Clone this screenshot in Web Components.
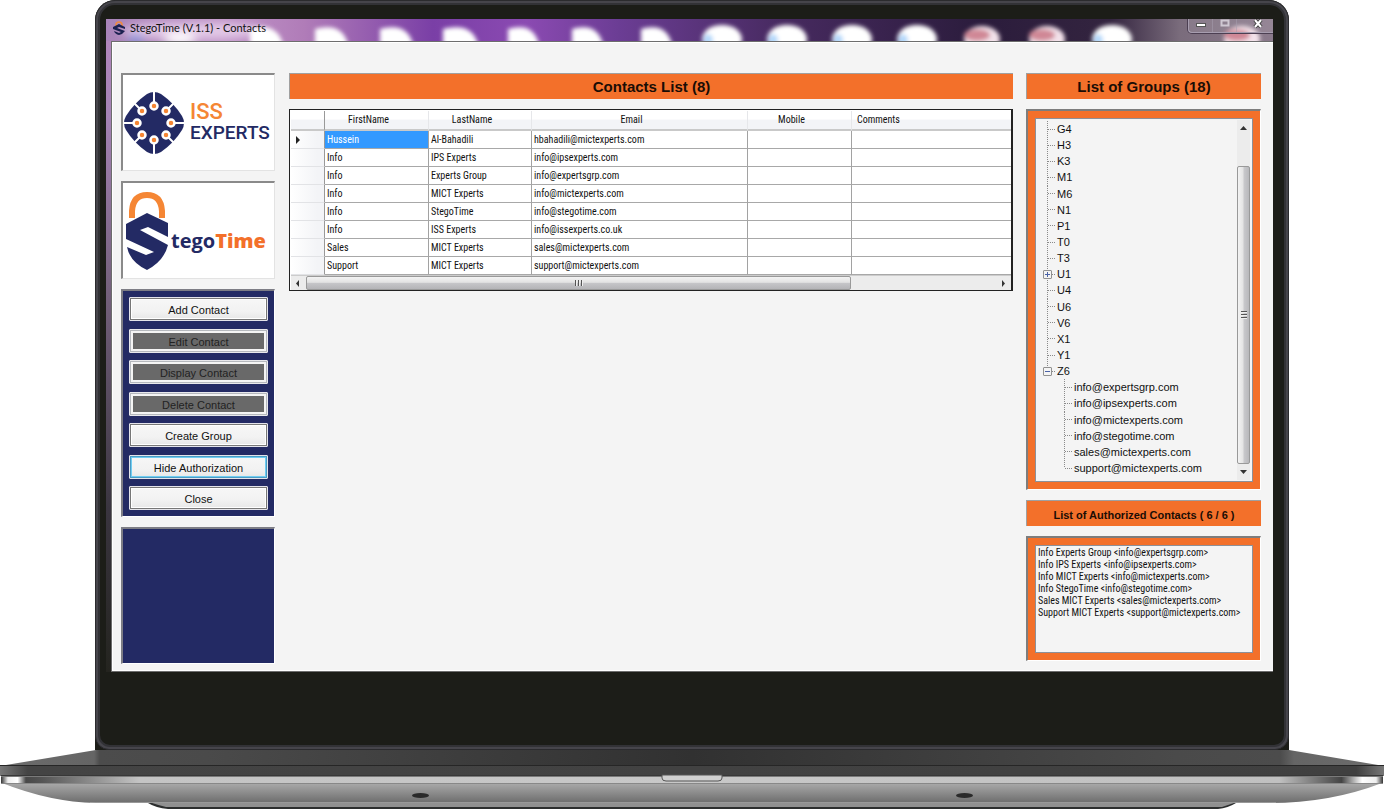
<!DOCTYPE html>
<html lang="en">
<head>
<meta charset="utf-8">
<title>StegoTime (V.1.1) - Contacts</title>
<style>
  body {
    margin: 0;
    background: #fff;
    color: #111;
    font-family: "Liberation Sans", Arial, sans-serif;
    --navy: #232a64;
    --orange: #f3702a;
    --face: #f4f4f4;
    --narrow: "Roboto Condensed", Lato, "Liberation Sans", sans-serif;
  }
</style>
</head>
<body>
<laptop-frame>
  <app-window>
    <span slot="title">StegoTime (V.1.1) - Contacts</span>
    <side-bar slot="left"></side-bar>
    <section-title slot="main">Contacts List (8)</section-title>
    <contacts-table slot="main"></contacts-table>
    <section-title slot="right">List of Groups (18)</section-title>
    <groups-tree slot="right"></groups-tree>
    <section-title slot="right" small>List of Authorized Contacts ( 6 / 6 )</section-title>
    <authorized-list slot="right"></authorized-list>
  </app-window>
</laptop-frame>

<script>
function define(name, html) {
  customElements.define(name, class extends HTMLElement {
    constructor() {
      super();
      const t = document.createElement('template');
      t.innerHTML = typeof html === 'function' ? html() : html;
      this.attachShadow({ mode: 'open' }).append(t.content.cloneNode(true));
    }
  });
}

define('laptop-frame', `
<style>
  :host { display: block; }
  .lid { margin: 0 95px; background: #1c1d18; border-radius: 20px 20px 0 0; }
  .rim { border: 1px solid #2b2b2e; border-radius: 20px 20px 14px 14px; background: #46454b; padding: 2px; }
  .rim2 { border: 2px solid #323236; border-radius: 17px 17px 12px 12px; background: #1c1d18; padding: 14px 11px 73px 6px; }
  .base { display: block; width: 100%; height: 59px; }
</style>
<div class="lid"><div class="rim"><div class="rim2"><slot></slot></div></div></div>
<svg class="base" viewBox="0 0 1384 59" preserveAspectRatio="none" aria-hidden="true">
  <defs>
    <linearGradient id="deck"><stop offset="0" stop-color="#6c6c6c"/><stop offset=".068" stop-color="#656565"/><stop offset=".072" stop-color="#4c4c4c"/><stop offset=".15" stop-color="#4a4a4a"/><stop offset=".5" stop-color="#313131"/><stop offset=".85" stop-color="#4a4a4a"/><stop offset=".925" stop-color="#4c4c4c"/><stop offset=".935" stop-color="#656565"/><stop offset="1" stop-color="#6c6c6c"/></linearGradient>
    <linearGradient id="edge"><stop offset="0" stop-color="#777"/><stop offset=".02" stop-color="#444"/><stop offset=".98" stop-color="#404040"/><stop offset="1" stop-color="#777"/></linearGradient>
    <linearGradient id="strip"><stop offset="0" stop-color="#333"/><stop offset=".005" stop-color="#eee"/><stop offset=".012" stop-color="#fff"/><stop offset=".018" stop-color="#484848"/><stop offset=".03" stop-color="#555"/><stop offset=".1" stop-color="#c4c4c4"/><stop offset=".5" stop-color="#c8c8c8"/><stop offset=".925" stop-color="#c0c0c0"/><stop offset=".97" stop-color="#444"/><stop offset=".985" stop-color="#fff"/><stop offset=".995" stop-color="#eee"/><stop offset="1" stop-color="#333"/></linearGradient>
    <linearGradient id="belly" x2="0" y2="1"><stop offset="0" stop-color="#aaa"/><stop offset="1" stop-color="#6c6c6c"/></linearGradient>
  </defs>
  <path d="M96 0H1289L1384 16H0Z" fill="url(#deck)"/>
  <path d="M148 53Q156 58 168 59H1218Q1228 58 1236 53Z" fill="#2c2e2e"/>
  <path d="M152 53Q158 55 166 57H1222Q1228 55 1234 53Z" fill="#909090"/>
  <path d="M2 33H1382Q1330 53 1270 53H96Q50 52 2 33Z" fill="url(#belly)"/>
  <path d="M90 52.500H1276" stroke="#ababab" fill="none" opacity=".7"/>
  <rect y="15" width="1384" height="11" fill="url(#edge)"/>
  <rect y="15" width="1384" height="1" fill="#262626"/>
  <rect x="1" y="25" width="1382" height="8" fill="url(#strip)"/>
  <rect x="1" y="25" width="1382" height="1" fill="#383838"/>
  <rect x="1" y="26" width="1382" height="1" fill="#7a7a7a"/>
  <rect x="1" y="33" width="1382" height="1" fill="#888"/>
  <path d="M662 25V28Q662 31 666 31H718Q722 31 722 28V25Z" fill="#d0d0d0" stroke="#555"/>
  <ellipse cx="420.500" cy="45.500" rx="8.500" ry="2.500" fill="#2a2a2a"/>
  <ellipse cx="964.500" cy="45.500" rx="8.500" ry="2.500" fill="#2a2a2a"/>
</svg>`);

function desktopBlobs() {
  const white = [[265,15],[330,15],[395,15],[459,16],[522,14],[586,14],[655,14]]
    .map(([x, r]) => `<path d="M${x-r-106} 26V10Q${x-106+r-2} 3 ${x-106+r+3} 26Z" fill="#fff"/>`).join('');
  const blue = [722,787,852,917,1112]
    .map(x => `<ellipse cx="${x-106}" cy="20" rx="20" ry="14" fill="#fff"/><ellipse cx="${x-120}" cy="21" rx="5" ry="6" fill="#b4d8fa"/>`).join('');
  const red = [980,1045,1240]
    .map(x => `<ellipse cx="${x-104}" cy="20" rx="18" ry="13" fill="#f3e2ea"/><ellipse cx="${x-109}" cy="16" rx="13" ry="6" fill="#d08896"/>`).join('');
  return white + blue + red;
}

define('app-window', () => `
<style>
  :host { display: block; background: linear-gradient(#b487bd, #a583b4 15%, #77637f 40%, #3a3540 75%, #24241f); padding-left: 5px; }
  header { position: relative; margin-left: -5px; height: 22px; overflow: hidden; display: flex; align-items: center; justify-content: space-between; background: linear-gradient(90deg, #a884b8 0, #c094c8 10%, #b07cb8 17%, #7a3fa6 28%, #8b4ab2 36%, #6b3d94 44%, #472a60 58%, #2b1c3c 75%, #33243f 86%, #7a6c7c 92%, #8b7a8c 100%); }
  .glow { position: absolute; inset: 0; width: 100%; height: 22px; }
  .title { position: relative; display: flex; align-items: center; gap: 5px; padding: 0 0 5px 7px; font: 11px/16px Lato, "Liberation Sans", sans-serif; color: #111; }
  .title svg { width: 12px; height: 14px; }
  .controls { position: relative; align-self: flex-start; display: flex; border: 1px solid #a79daf; border-width: 0 0 1px 1px; border-radius: 0 0 0 4px; box-shadow: 0 0 0 1px #4c3f52; }
  .controls button { box-sizing: border-box; width: 24px; height: 13px; padding: 0; border: 0; border-right: 1px solid #a79daf88; background: #ffffff18; display: flex; justify-content: center; align-items: flex-start; }
  .controls button:last-child { width: 36px; padding-left: 5px; border: 0; }
  .body { display: grid; grid-template-columns: 154px minmax(0, 1fr) 235px; column-gap: 13px; align-items: stretch; background: var(--face); border: 1px solid #6d6d6d; border-right: 0; box-shadow: inset 1px 1px #fff, inset 0 -1px #fff; padding: 31px 12px 7px 9px; }
  .col { display: flex; flex-direction: column; gap: 10px; }
  .main { padding-left: 1px; }
  .right { padding-bottom: 3px; }
</style>
<header>
  <svg class="glow" viewBox="0 0 1167 22" preserveAspectRatio="xMinYMin slice" aria-hidden="true">
    <defs><filter id="b" x="-20%" y="-80%" width="140%" height="260%"><feGaussianBlur stdDeviation="2"/></filter>
    <filter id="b2" x="-20%" y="-80%" width="140%" height="260%"><feGaussianBlur stdDeviation="5"/></filter></defs>
    <g filter="url(#b2)"><ellipse cx="88" cy="12" rx="72" ry="8" fill="#e4cbe8"/><ellipse cx="30" cy="20" rx="8" ry="5" fill="#7e8ed8"/><ellipse cx="74" cy="20" rx="16" ry="6" fill="#fff"/></g>
    <g filter="url(#b)">${desktopBlobs()}</g>
  </svg>
  <div class="title">
    <svg viewBox="0 0 12 14" aria-hidden="true"><path d="M3 5V4Q3 1 6 1T9 4V5" fill="none" stroke="#f08a3c" stroke-width="1.500"/><path d="M6 3L12 6V8L6 6L4 7L12 10Q10 13 6 14Q2 13 1 10L6 12L8 11L0 8V6Z" fill="#1c2150"/></svg>
    <slot name="title"></slot>
  </div>
  <div class="controls">
    <button aria-label="Minimize"><svg width="12" height="12"><rect x="1.500" y="4.500" width="9" height="3" fill="#fff" stroke="#555"/></svg></button>
    <button aria-label="Maximize"><svg width="12" height="12"><rect x="2.500" y="1.500" width="7" height="5" fill="none" stroke="#cfc8d2" stroke-width="2"/></svg></button>
    <button aria-label="Close"><svg width="12" height="12"><path d="M3 1L9 8M9 1L3 8" stroke="#444" stroke-width="4"/><path d="M3 1L9 8M9 1L3 8" stroke="#fff" stroke-width="2"/></svg></button>
  </div>
</header>
<div class="body">
  <div class="col"><slot name="left"></slot></div>
  <div class="col main"><slot name="main"></slot></div>
  <div class="col right"><slot name="right"></slot></div>
</div>`);

define('section-title', `
<style>
  :host { display: block; box-sizing: border-box; height: 26px; border: 1px solid #a0a0a0; border-width: 1px 0 0 1px; background: var(--orange); color: #1a0d05; text-align: center; font-weight: bold; font-size: 15px; line-height: 26px; }
  :host([small]) { font-size: 11px; line-height: 28px; }
</style><slot></slot>`);

define('iss-logo', `
<style>
  :host { display: flex; align-items: center; gap: 6px; height: 100%; padding-left: 1px; }
  svg { flex: none; width: 60px; height: 62px; }
  .word { display: flex; flex-direction: column; padding-bottom: 2px; font: 500 19px/19px Roboto, sans-serif; color: var(--navy); }
  .word span:first-child { font-size: 22px; line-height: 22px; color: #f58634; }
</style>
<svg viewBox="-30 -31 60 62" aria-hidden="true">
  <path d="M-7 -29Q0 -33 7 -29Q20 -20 28 -7Q32 0 28 7Q20 20 7 29Q0 33 -7 29Q-20 20 -28 7Q-32 0 -28 -7Q-20 -20 -7 -29Z" fill="#232a64"/>
  <g stroke="#fff" stroke-width="2"><path d="M0 -31V-17M0 31V17M-31 0H-17M31 0H17M-21 -21L-12 -12M21 -21L12 -12M-21 21L-12 12M21 21L12 12"/></g>
  <g fill="#f58634" stroke="#fff" stroke-width="2.500"><circle cy="-17" r="3.500"/><circle cy="17" r="3.500"/><circle cx="-17" r="3.500"/><circle cx="17" r="3.500"/><circle cx="-12" cy="-12" r="3.500"/><circle cx="12" cy="-12" r="3.500"/><circle cx="-12" cy="12" r="3.500"/><circle cx="12" cy="12" r="3.500"/></g>
</svg>
<div class="word"><span>ISS</span><span>EXPERTS</span></div>`);

define('stego-logo', `
<style>
  :host { display: flex; align-items: center; gap: 3px; height: 100%; padding-left: 3px; }
  svg { flex: none; width: 42px; height: 80px; }
  .word { font: bold 20px/30px "Open Sans", sans-serif; color: var(--navy); padding-top: 20px; }
  .word b { color: #f3702a; }
</style>
<svg viewBox="0 0 42 80" aria-hidden="true">
  <path d="M6 27V20Q7 4 21 4T36 20V27" fill="none" stroke="#f58634" stroke-width="6"/>
  <path d="M21 22L42 32V46L22 36L14 39L42 54Q38 70 21 79Q4 71 1 56L20 64L28 61L0 48V33Z" fill="#232a64"/>
</svg>
<span class="word">tego<b>Time</b></span>`);

define('side-bar', `
<style>
  :host { display: flex; flex-direction: column; gap: 10px; flex: 1; }
  .card { box-sizing: border-box; height: 98px; background: #fff; border: 2px solid #8a8a8a; border-width: 2px 1px 1px 2px; border-right-color: #e3e3e3; border-bottom-color: #e3e3e3; overflow: hidden; }
  .panel { box-sizing: border-box; background: var(--navy); border: 2px solid #7d7d85; border-width: 2px 1px 1px 2px; border-right-color: #fff; border-bottom-color: #fff; }
  nav { height: 228px; padding: 6px; display: flex; flex-direction: column; justify-content: space-between; }
  .info { flex: 1; min-height: 137px; }
  button { height: 24px; padding: 2px 0 0; font: 11px/14px "Liberation Sans", sans-serif; color: #111; border: 1px solid #e4e4ea; border-radius: 1px; background: linear-gradient(#f7f7f7, #f2f2f2 60%, #e6e6e6); box-shadow: inset 0 0 0 1px #777, inset 0 0 0 2px #fff; }
  button:disabled { color: #222; background: #696969; border-color: #e8e8ec; box-shadow: inset 0 0 0 1px #b5b8bd, inset 0 0 0 3px #f4f4f4; }
  button.on { box-shadow: inset 0 0 0 1px #4a9cc4, inset 0 0 0 2px #70cdf2; }
</style>
<div class="card"><iss-logo></iss-logo></div>
<div class="card"><stego-logo></stego-logo></div>
<nav class="panel">
  <button>Add Contact</button>
  <button disabled>Edit Contact</button>
  <button disabled>Display Contact</button>
  <button disabled>Delete Contact</button>
  <button>Create Group</button>
  <button class="on">Hide Authorization</button>
  <button>Close</button>
</nav>
<div class="panel info"></div>`);

const contacts = [
  ['Hussein', 'Al-Bahadili', 'hbahadili@mictexperts.com'],
  ['Info', 'IPS Experts', 'info@ipsexperts.com'],
  ['Info', 'Experts Group', 'info@expertsgrp.com'],
  ['Info', 'MICT Experts', 'info@mictexperts.com'],
  ['Info', 'StegoTime', 'info@stegotime.com'],
  ['Info', 'ISS Experts', 'info@issexperts.co.uk'],
  ['Sales', 'MICT Experts', 'sales@mictexperts.com'],
  ['Support', 'MICT Experts', 'support@mictexperts.com']
];

define('contacts-table', () => `
<style>
  :host { display: block; border: 1px solid #222; border-right-width: 2px; background: #fff; padding: 1px 0 0 1px; font: 10px/16px var(--narrow); }
  table { width: 100%; table-layout: fixed; border-collapse: separate; border-spacing: 0; }
  th, td { box-sizing: border-box; padding: 0; font-weight: normal; white-space: nowrap; overflow: hidden; }
  thead th { height: 20px; padding: 0 16px 0 0; background: linear-gradient(#fff 45%, #f3f4f7 50%, #f3f4f7); border-bottom: 2px solid #c9c9c9; border-right: 1px solid #e6e7ea; }
  thead th:first-child { border-right-color: #999; }
  thead th:last-child { text-align: left; padding-left: 5px; border-right: 0; }
  tbody td { height: 18px; padding-left: 2px; border-right: 1px solid #a2a2a2; border-bottom: 1px solid #a8a8a8; text-align: left; }
  tbody td:last-child { border-right: 0; }
  tbody th { text-align: left; padding-left: 5px; height: 18px; border-right: 1px solid #999; border-bottom: 1px solid #e2e3e6; background: linear-gradient(90deg, #fff, #f3f4f7 80%); }
  tbody svg { display: block; }
  .sel { background: #3399ff; color: #fff; }
  .bar { display: flex; align-items: center; height: 14px; background: #ececec; border-top: 1px solid #ccc; }
  .bar svg { flex: none; width: 15px; height: 15px; }
  .track { flex: 1; display: flex; height: 100%; }
  .thumb { flex: 0 0 79%; display: flex; gap: 1px; align-items: center; justify-content: center; box-sizing: border-box; border: 1px solid #999; border-radius: 2px; background: linear-gradient(#f3f3f3, #e2e2e2 45%, #c6c6c9 50%, #b4b4b7); }
  .thumb i { width: 1px; height: 6px; background: #555; border-right: 1px solid #eee; }
</style>
<table>
  <colgroup><col style="width:34px"><col style="width:104px"><col style="width:103px"><col style="width:216px"><col style="width:104px"><col></colgroup>
  <thead><tr><th></th><th>FirstName</th><th>LastName</th><th>Email</th><th>Mobile</th><th>Comments</th></tr></thead>
  <tbody>${contacts.map((r, i) => `<tr><th>${i ? '' : '<svg width="5" height="8" aria-hidden="true"><path d="M0 0L4 4L0 8Z" fill="#222"/></svg>'}</th><td${i ? '' : ' class="sel"'}>${r[0]}</td><td>${r[1]}</td><td>${r[2]}</td><td></td><td></td></tr>`).join('')}</tbody>
</table>
<div class="bar" aria-hidden="true">
  <svg viewBox="0 0 15 15"><path d="M8 4V11L5 7.500Z" fill="#333"/></svg>
  <div class="track"><div class="thumb"><i></i><i></i><i></i></div></div>
  <svg viewBox="0 0 15 15"><path d="M6 4V11L9 7.500Z" fill="#333"/></svg>
</div>`);

const groups = ['G4','H3','K3','M1','M6','N1','P1','T0','T3','U1','U4','U6','V6','X1','Y1'];
const members = ['info@expertsgrp.com','info@ipsexperts.com','info@mictexperts.com','info@stegotime.com','sales@mictexperts.com','support@mictexperts.com'];

const panelStyle = `
  :host { box-sizing: border-box; background: var(--orange); border: 2px solid #7d7d7d; border-width: 2px 1px 1px 2px; border-right-color: #fff; border-bottom-color: #fff; padding: 7px; }
  .box { box-sizing: border-box; background: var(--face); border: 1px solid #8d9098; }`;

define('groups-tree', () => `
<style>${panelStyle}
  :host { display: flex; flex: 1; min-height: 380px; font: 11px/14px "Liberation Sans", sans-serif; }
  .box { flex: 1; display: flex; padding: 1px 2px 1px 0; }
  ul { list-style: none; margin: 0; padding: 0; }
  .root { flex: 1; display: flex; flex-direction: column; padding: 1px 0 4px; }
  li, li ul { display: contents; }
  .row { flex: 1; box-sizing: border-box; display: flex; align-items: center; padding-left: 21px; --dot: #8a8a8a;
    background: repeating-linear-gradient(var(--dot) 0 1px, transparent 1px 2px) 11px 0 / 1px 100% no-repeat,
      repeating-linear-gradient(90deg, var(--dot) 0 1px, transparent 1px 2px) 12px 50% / 7px 1px no-repeat; }
  .row.open { background-size: 1px 50%, 7px 1px; }
  li li .row { padding-left: 38px; background-position: 28px 0, 29px 50%; }
  li li:last-child .row { background-size: 1px 50%, 7px 1px; }
  button { width: 9px; height: 9px; margin: 0 5px 0 -14px; padding: 0; border: 1px solid #919191; border-radius: 1px; background: linear-gradient(#4b63a7, #4b63a7) center / 5px 1px no-repeat, #f4f4f4; }
  button.plus { background: linear-gradient(#4b63a7, #4b63a7) center / 5px 1px no-repeat, linear-gradient(#4b63a7, #4b63a7) center / 1px 5px no-repeat, #f4f4f4; }
  .scroll { width: 13px; display: flex; flex-direction: column; align-items: center; background: #ececec; }
  .scroll svg { width: 13px; height: 16px; flex: none; }
  .track { flex: 1; width: 100%; display: flex; flex-direction: column; justify-content: flex-end; }
  .thumb { box-sizing: border-box; height: 91%; border: 1px solid #999; border-radius: 2px; background: linear-gradient(90deg, #f3f3f3, #e4e4e4 45%, #c8c8cb 55%, #b8b8bb); display: flex; flex-direction: column; justify-content: center; align-items: center; gap: 1px; }
  .thumb i { width: 6px; height: 1px; background: #555; border-bottom: 1px solid #eee; }
</style>
<div class="box">
  <ul class="root">
    ${groups.map(g => `<li><div class="row">${g === 'U1' ? '<button class="plus" aria-label="Expand U1"></button>' : ''}<span>${g}</span></div></li>`).join('')}
    <li><div class="row open"><button aria-label="Collapse Z6"></button><span>Z6</span></div>
      <ul>${members.map(m => `<li><div class="row"><span>${m}</span></div></li>`).join('')}</ul></li>
  </ul>
  <div class="scroll" aria-hidden="true">
    <svg viewBox="0 0 13 16"><path d="M3 10H10L6.500 6Z" fill="#333"/></svg>
    <div class="track"><div class="thumb"><i></i><i></i><i></i></div></div>
    <svg viewBox="0 0 13 16"><path d="M3 6H10L6.500 10Z" fill="#333"/></svg>
  </div>
</div>`);

const authorized = ['Info Experts Group <info@expertsgrp.com>','Info IPS Experts <info@ipsexperts.com>','Info MICT Experts <info@mictexperts.com>','Info StegoTime <info@stegotime.com>','Sales MICT Experts <sales@mictexperts.com>','Support MICT Experts <support@mictexperts.com>'];

define('authorized-list', () => `
<style>${panelStyle}
  :host { display: block; height: 125px; font: 10px/12px var(--narrow); }
  .box { height: 100%; margin: 0; padding: 1px 2px; list-style: none; white-space: nowrap; }
</style>
<ul class="box">${authorized.map(a => `<li>${a.replace('<', '&lt;').replace('>', '&gt;')}</li>`).join('')}</ul>`);
</script>
</body>
</html>
